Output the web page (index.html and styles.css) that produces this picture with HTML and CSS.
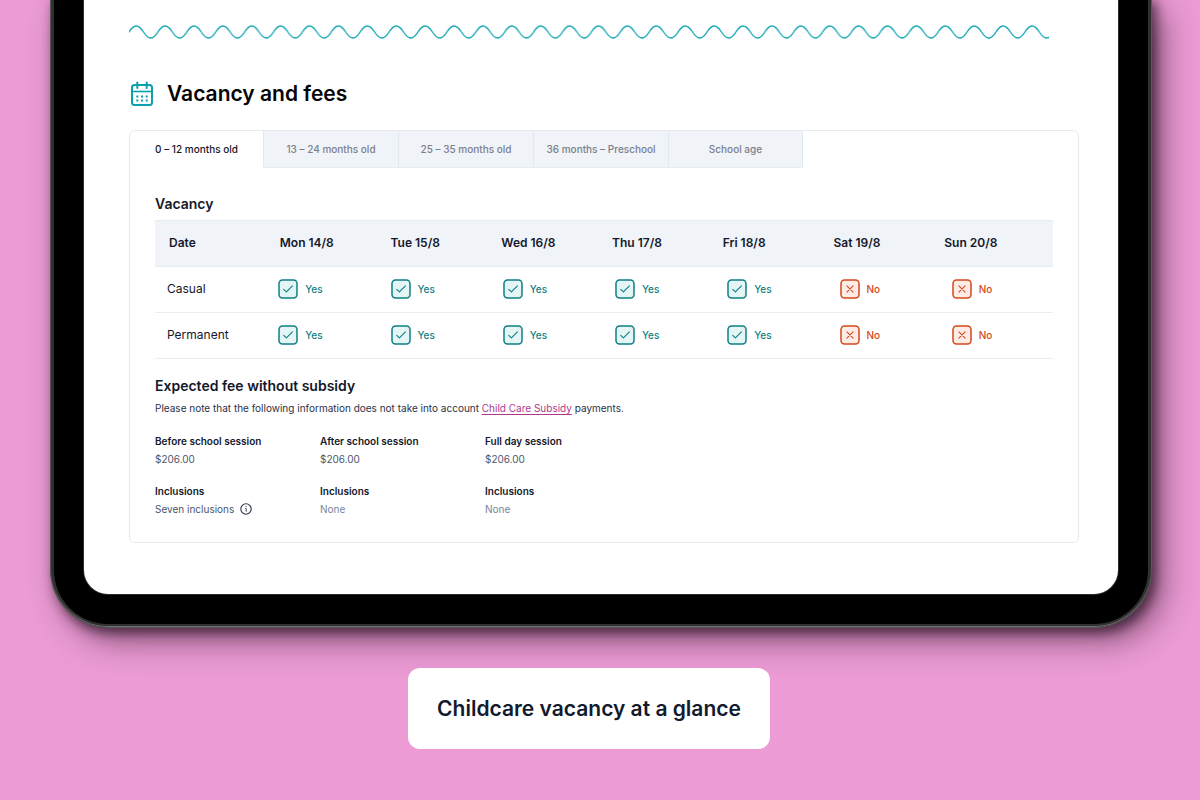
FILE: index.html
```html
<!DOCTYPE html>
<html lang="en">
<head>
<meta charset="utf-8">
<meta name="viewport" content="width=device-width, initial-scale=1">
<title>Childcare vacancy at a glance</title>
<link rel="stylesheet" href="styles.css">
</head>
<body>
<svg class="sprite" width="0" height="0" aria-hidden="true">
  <symbol id="yes" viewBox="0 0 20 20">
    <rect x="1" y="1" width="18" height="18" rx="3.5" fill="#e3f5f4" stroke="#0f7f83" stroke-width="1.5"/>
    <path d="M5.7 10.3l2.7 2.6 6-6" fill="none" stroke="#0f7f83" stroke-width="1.1" stroke-linecap="round" stroke-linejoin="round"/>
  </symbol>
  <symbol id="no" viewBox="0 0 20 20">
    <rect x="1" y="1" width="18" height="18" rx="3.5" fill="#fdece6" stroke="#d4481a" stroke-width="1.5"/>
    <path d="M6.9 6.9l6.2 6.2M13.1 6.9l-6.2 6.2" fill="none" stroke="#d4481a" stroke-width="1.1" stroke-linecap="round"/>
  </symbol>
</svg>

<main class="stage">
  <section class="tablet">
    <div class="screen">
      <svg class="wave" aria-hidden="true">
        <defs>
          <pattern id="ripple" width="28.9" height="14" patternUnits="userSpaceOnUse">
            <path d="M-14.45 7C-9.25 15 -5.2 15 0 7C5.2 -1 9.25 -1 14.45 7C19.65 15 23.7 15 28.9 7C34.1 -1 38.1 -1 43.3 7" fill="none" stroke="#17a9b5" stroke-width="1.3"/>
          </pattern>
        </defs>
        <rect width="100%" height="14" fill="url(#ripple)"/>
      </svg>

      <header class="heading">
        <svg class="calendar" viewBox="0 0 26 26" fill="none" stroke="#0aa0ae" stroke-width="2" aria-hidden="true">
          <rect x="3" y="4" width="20" height="20" rx="2.5"/>
          <path d="M3 10.5h20" stroke-width="1.6"/>
          <path d="M8.3 1.5v5.500M17.700 1.500v5.500" stroke-linecap="round"/>
          <path d="M7.300 15.500h2M12 15.500h2M16.700 15.500h2M7.300 19.500h2M12 19.500h2M16.700 19.500h2"/>
        </svg>
        <h1>Vacancy and fees</h1>
      </header>

      <div class="card">
        <div class="tabs" role="tablist" aria-label="Age group">
          <button class="tab tab-active" role="tab" aria-selected="true">0 – 12 months old</button>
          <button class="tab" role="tab" aria-selected="false">13 – 24 months old</button>
          <button class="tab" role="tab" aria-selected="false">25 – 35 months old</button>
          <button class="tab" role="tab" aria-selected="false">36 months – Preschool</button>
          <button class="tab" role="tab" aria-selected="false">School age</button>
        </div>

        <div class="panel" role="tabpanel">
          <h2 id="vacancy">Vacancy</h2>
          <table class="vacancies" aria-labelledby="vacancy">
            <thead>
              <tr><th scope="col">Date</th><th scope="col">Mon 14/8</th><th scope="col">Tue 15/8</th><th scope="col">Wed 16/8</th><th scope="col">Thu 17/8</th><th scope="col">Fri 18/8</th><th scope="col">Sat 19/8</th><th scope="col">Sun 20/8</th></tr>
            </thead>
            <tbody>
              <tr>
                <th scope="row">Casual</th>
                <td class="yes"><svg><use href="#yes"/></svg>Yes</td>
                <td class="yes"><svg><use href="#yes"/></svg>Yes</td>
                <td class="yes"><svg><use href="#yes"/></svg>Yes</td>
                <td class="yes"><svg><use href="#yes"/></svg>Yes</td>
                <td class="yes"><svg><use href="#yes"/></svg>Yes</td>
                <td class="no"><svg><use href="#no"/></svg>No</td>
                <td class="no"><svg><use href="#no"/></svg>No</td>
              </tr>
              <tr>
                <th scope="row">Permanent</th>
                <td class="yes"><svg><use href="#yes"/></svg>Yes</td>
                <td class="yes"><svg><use href="#yes"/></svg>Yes</td>
                <td class="yes"><svg><use href="#yes"/></svg>Yes</td>
                <td class="yes"><svg><use href="#yes"/></svg>Yes</td>
                <td class="yes"><svg><use href="#yes"/></svg>Yes</td>
                <td class="no"><svg><use href="#no"/></svg>No</td>
                <td class="no"><svg><use href="#no"/></svg>No</td>
              </tr>
            </tbody>
          </table>

          <h2>Expected fee without subsidy</h2>
          <p class="note">Please note that the following information does not take into account <a href="#subsidy">Child Care Subsidy</a> payments.</p>

          <div class="fees" id="subsidy">
            <dl class="fee">
              <dt>Before school session</dt><dd>$206.00</dd>
              <dt>Inclusions</dt>
              <dd>Seven inclusions
                <button class="info" aria-label="Show inclusions">
                  <svg viewBox="0 0 12 12" fill="none" stroke="#2b3147" aria-hidden="true"><circle cx="6" cy="6" r="5.2" stroke-width="1.1"/><path d="M5.300 5.400h.9v3.300" stroke-width=".9"/><circle cx="6" cy="3.500" r=".6" fill="#2b3147" stroke="none"/></svg>
                </button>
              </dd>
            </dl>
            <dl class="fee">
              <dt>After school session</dt><dd>$206.00</dd>
              <dt>Inclusions</dt><dd class="none">None</dd>
            </dl>
            <dl class="fee">
              <dt>Full day session</dt><dd>$206.00</dd>
              <dt>Inclusions</dt><dd class="none">None</dd>
            </dl>
          </div>
        </div>
      </div>
    </div>
  </section>

  <p class="caption">Childcare vacancy at a glance</p>
</main>
</body>
</html>
```
FILE: styles.css
```css
* { box-sizing: border-box; }

body {
  margin: 0;
  min-height: 100vh;
  background: #ec9bd5;
  color: #14182b;
  font-family: Inter, "Liberation Sans", sans-serif;
}

h1, h2, p, dl, dd { margin: 0; }

button {
  border: 0;
  padding: 0;
  background: none;
  font: inherit;
  color: inherit;
  cursor: pointer;
}

.sprite { position: absolute; }

.stage {
  display: flex;
  flex-direction: column;
  padding: 0 48px 50px 50px;
  overflow: hidden;
}

.tablet {
  margin-top: -4px;
  padding: 4px 33px 33px;
  background: #000;
  border: 1px solid #58585a;
  border-top: 0;
  border-radius: 0 0 58px 58px;
  box-shadow:
    inset 0 -1px 0 #6c6c6e,
    inset 0 0 0 3px #303031,
    4px 5px 12px rgba(20, 5, 16, .6),
    12px 14px 32px rgba(30, 8, 25, .45);
}

.screen {
  padding: 25px 39px 51px 45px;
  background: #fff;
  border-radius: 0 0 24px 24px;
  box-shadow: 0 0 0 1px #2c2c2c;
}

.wave {
  display: block;
  width: calc(100% - 30px);
  height: 14px;
}

.heading {
  display: flex;
  align-items: center;
  gap: 12px;
  padding: 41px 0 22px;
}

.heading h1 {
  color: #050507;
  font-size: 21px;
  font-weight: 600;
  line-height: 28px;
}

.calendar { width: 26px; height: 26px; }

.card {
  border: 1px solid #e8ebee;
  border-radius: 6px;
}

.tabs { display: flex; }

.tab {
  flex: 0 1 135px;
  height: 37px;
  background: #f0f3f8;
  border-bottom: 1px solid #e6ebf2;
  border-right: 1px solid #e2e8ef;
  color: #7b808d;
  font-size: 10px;
  font-weight: 500;
  white-space: nowrap;
}

.tab:last-child { flex-basis: 134px; }

.tab-active {
  flex-basis: 134px;
  background: none;
  border-bottom-color: transparent;
  color: #14182b;
}

.panel { padding: 26px 25px 24px; }

h2 {
  font-size: 14px;
  font-weight: 600;
  line-height: 20px;
}

.vacancies {
  display: block;
  margin: 6px 0 17px;
}

.vacancies thead,
.vacancies tbody { display: block; }

.vacancies tr {
  display: grid;
  grid-template-columns: repeat(8, 1fr);
  align-items: center;
  height: 46px;
  padding-bottom: 2px;
  border-bottom: 1px solid #e9eef5;
}

.vacancies thead tr {
  height: 47px;
  padding-right: 12px;
  background: #f0f3f8;
  border-top: 1px solid #e6ebf2;
}

.vacancies th {
  padding: 0 0 0 12px;
  text-align: left;
  font-size: 12px;
  font-weight: 400;
}

.vacancies thead th {
  padding-left: 14px;
  font-weight: 600;
}

.vacancies td {
  display: flex;
  align-items: center;
  gap: 7px;
  padding: 0 0 0 11px;
  font-size: 10px;
  font-weight: 500;
}

.vacancies svg { width: 20px; height: 20px; }

.yes { color: #0f7f83; }
.no { color: #d4481a; }

.note {
  margin: 4px 0 16px;
  color: #2b3147;
  font-size: 10px;
  line-height: 16px;
}

.note a {
  color: #b0388c;
  text-decoration: underline;
  text-underline-offset: 2px;
}

.fees {
  display: flex;
  flex-wrap: wrap;
}

.fee {
  flex: 0 1 165px;
  font-size: 10px;
  line-height: 18px;
}

.fee dt { font-weight: 600; }

.fee dd {
  display: flex;
  align-items: center;
  gap: 6px;
  color: #4c566b;
}

.fee dd + dt { margin-top: 14px; }
.fee .none { color: #76849c; }

.info {
  display: flex;
  width: 12px;
  height: 12px;
}

.caption {
  align-self: center;
  margin: 40px 24px 0 0;
  padding: 27px 29px 26px;
  background: #fff;
  border-radius: 12px;
  color: #111a2e;
  font-size: 21px;
  font-weight: 600;
  line-height: 28px;
}
```
